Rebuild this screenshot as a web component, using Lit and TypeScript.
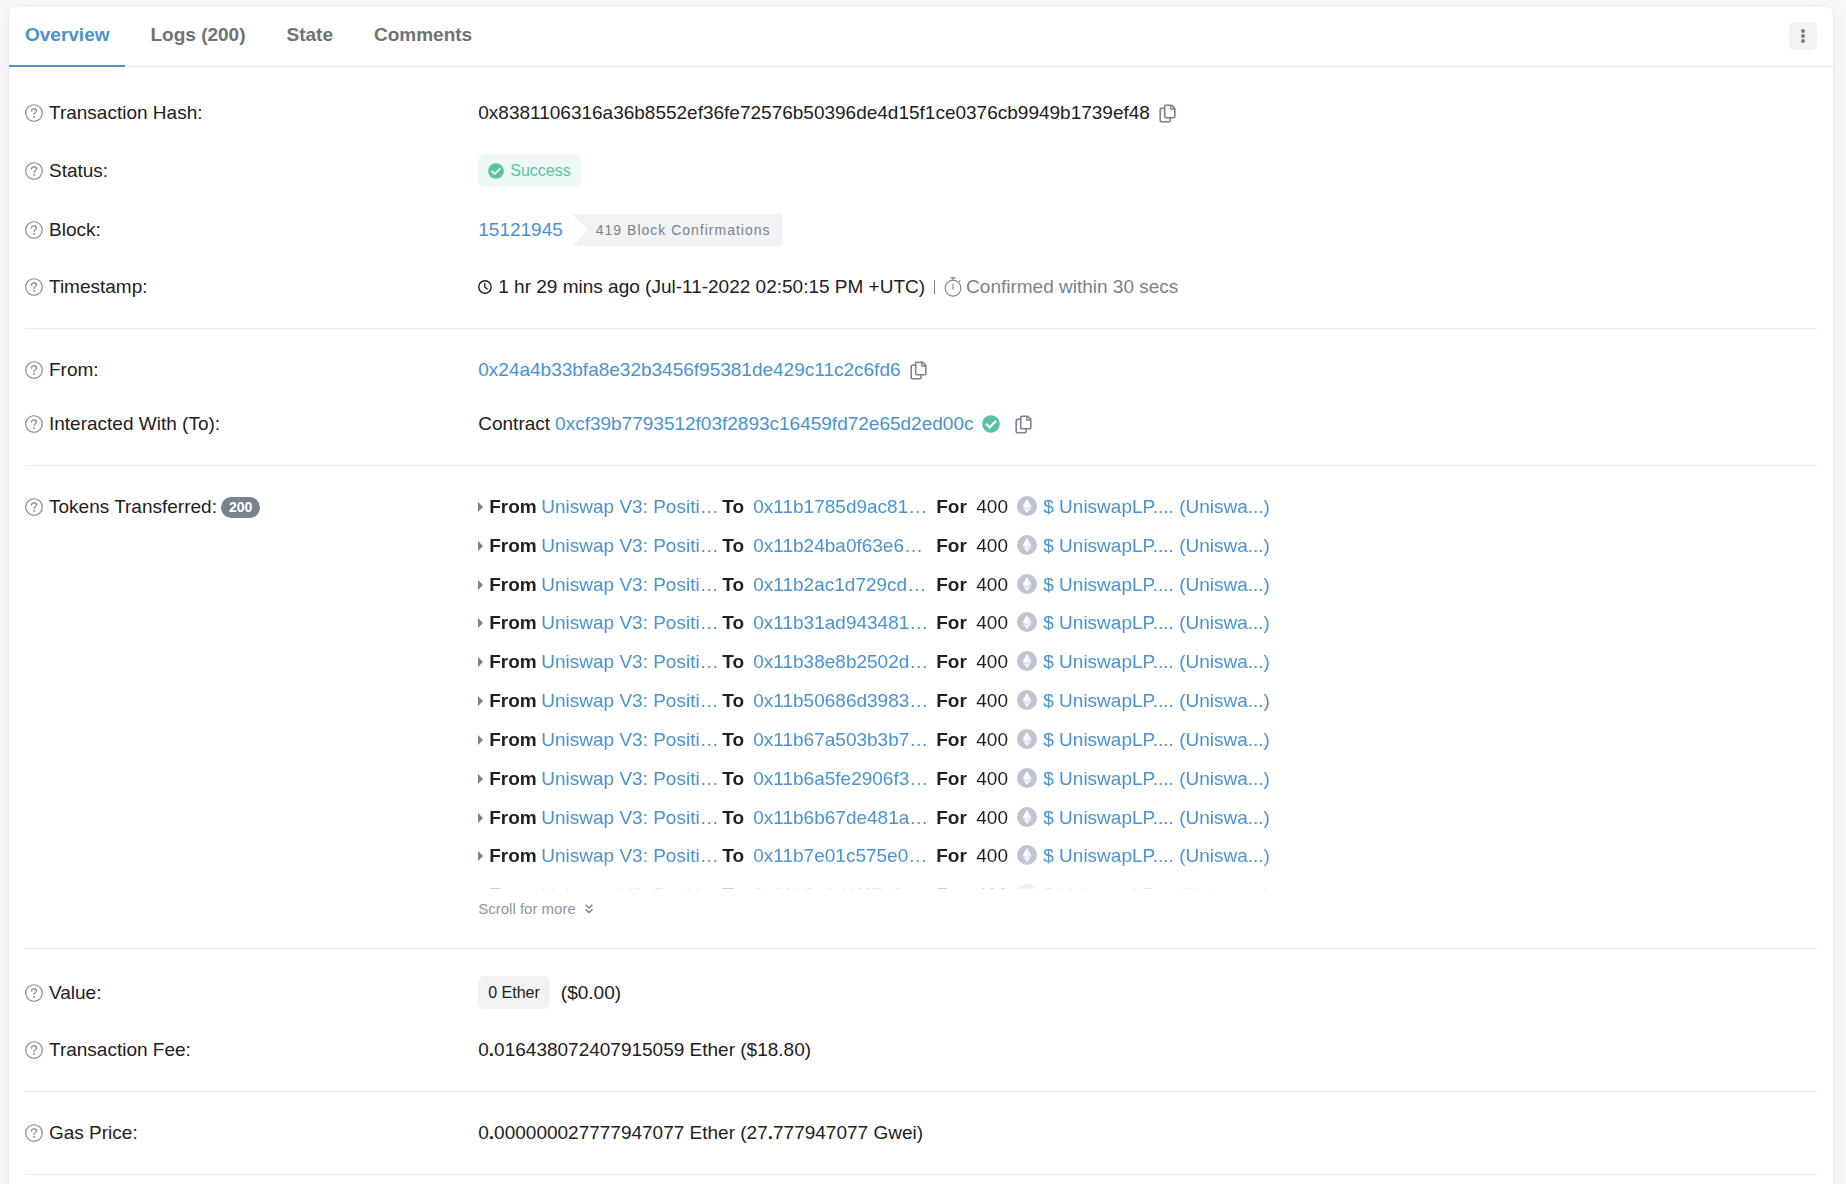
import { LitElement, html, css, nothing, type TemplateResult } from "lit";
import { customElement, property } from "lit/decorators.js";

interface Transfer {
  from: string;
  to: string;
  amount: string;
}

const recipients = [
  "0x11b1785d9ac81…",
  "0x11b24ba0f63e6…",
  "0x11b2ac1d729cd…",
  "0x11b31ad943481…",
  "0x11b38e8b2502d…",
  "0x11b50686d3983…",
  "0x11b67a503b3b7…",
  "0x11b6a5fe2906f3…",
  "0x11b6b67de481a…",
  "0x11b7e01c575e0…",
  "0x11b8a1d4f27c3…",
];

const transfers: Transfer[] = recipients.map((to) => ({
  from: "Uniswap V3: Positi…",
  to,
  amount: "400",
}));

const helpIcon = html`<svg class="help" viewBox="0 0 18 18" aria-hidden="true">
  <circle cx="9" cy="9" r="8.3" fill="none" stroke="currentColor" stroke-width="1.1" />
  <path d="M6.5 7.1C6.5 5.6 7.6 4.8 9 4.8s2.5.8 2.5 2.1c0 1.7-2.4 1.8-2.4 3.6" fill="none" stroke="currentColor" stroke-width="1.2" stroke-linecap="round" />
  <circle cx="9.1" cy="12.9" r=".9" fill="currentColor" />
</svg>`;

const checkIcon = html`<svg class="check" viewBox="0 0 512 512" aria-hidden="true">
  <path fill="currentColor" d="M504 256c0 136.967-111.033 248-248 248S8 392.967 8 256 119.033 8 256 8s248 111.033 248 248zM227.314 387.314l184-184c6.248-6.248 6.248-16.379 0-22.627l-22.627-22.627c-6.248-6.249-16.379-6.249-22.628 0L216 308.118l-70.059-70.059c-6.248-6.248-16.379-6.248-22.628 0l-22.627 22.627c-6.248 6.248-6.248 16.379 0 22.627l104 104c6.249 6.249 16.379 6.249 22.628.001z" />
</svg>`;

const copyIcon = html`<svg class="copy-icon" viewBox="0 0 17 19" aria-hidden="true">
  <g fill="none" stroke="currentColor" stroke-width="1.6" stroke-linejoin="round">
    <path d="M6.7 1.2H12.4L15.8 4.4V12.6Q15.8 13.8 14.6 13.8H6.9Q5.7 13.8 5.7 12.6V2.2Q5.7 1.2 6.7 1.2Z" />
    <path d="M5.7 4.3H2.3Q1.2 4.3 1.2 5.4V16.6Q1.2 17.8 2.3 17.8H9.9Q11.1 17.8 11.1 16.6V13.8" />
    <path d="M11.8 1.4V5H15.6" stroke-width="1.3" />
  </g>
</svg>`;

const clockIcon = html`<svg class="clock" viewBox="0 0 14 14" aria-hidden="true">
  <circle cx="7" cy="7" r="6.2" fill="none" stroke="currentColor" stroke-width="1.4" />
  <path d="M6.8 3.4V7.2L9.2 8.9" fill="none" stroke="currentColor" stroke-width="1.3" stroke-linecap="round" />
</svg>`;

const stopwatchIcon = html`<svg class="stopwatch" viewBox="0 0 18 20" aria-hidden="true">
  <g fill="none" stroke="currentColor" stroke-width="1.1" stroke-linecap="round">
    <circle cx="9" cy="11.2" r="7.9" />
    <path d="M7 .9H11M9 1V3.2M15 4.6L16 3.6M9 7V12.2" />
  </g>
</svg>`;

const etherIcon = html`<svg class="ether" viewBox="0 0 20 20" aria-hidden="true">
  <circle cx="10" cy="10" r="10" fill="#bfc4d2" />
  <path d="M10 3L14.3 10.2 10 12.7 5.7 10.2Z" fill="#fff" />
  <path d="M5.7 11.2L10 13.7 14.3 11.2 10 17Z" fill="#fff" />
  <path d="M10 3V12.7L14.3 10.2Z M10 13.7V17L14.3 11.2Z" fill="#f1f2f6" />
</svg>`;

const chevronsIcon = html`<svg class="chevrons" viewBox="0 0 8 10" aria-hidden="true">
  <path d="M1 1.2L4 4 7 1.2M1 5.7L4 8.5 7 5.7" fill="none" stroke="currentColor" stroke-width="1.5" stroke-linecap="round" stroke-linejoin="round" />
</svg>`;

@customElement("detail-row")
class DetailRow extends LitElement {
  @property() label = "";
  @property() count = "";

  static styles = css`
    :host {
      display: grid;
      grid-template-columns: 1fr 3fr;
      column-gap: 7px;
      line-height: 28px;
    }
    .label {
      display: flex;
      align-items: center;
      align-self: center;
      gap: 6px;
    }
    :host([top]) .label {
      align-self: start;
    }
    .help {
      width: 18px;
      height: 18px;
      color: #77838f;
    }
    .count {
      padding: 0 8px;
      margin-left: -2px;
      border-radius: 11px;
      background: #77838f;
      color: #fff;
      font-size: 14px;
      font-weight: 700;
      line-height: 21px;
    }
    .value {
      display: flex;
      align-items: center;
      min-width: 0;
    }
  `;

  render() {
    return html`
      <div class="label">
        ${helpIcon}<span>${this.label}</span>
        ${this.count ? html`<span class="count">${this.count}</span>` : nothing}
      </div>
      <div class="value"><slot></slot></div>
    `;
  }
}

@customElement("app-root")
class AppRoot extends LitElement {
  static styles = css`
    :host {
      display: flex;
      flex-direction: column;
      box-sizing: border-box;
      min-height: 100vh;
      padding: 5px 12px 0 8px;
      background: #f8f9fb;
      color: #1e2022;
      font-family: "Liberation Sans", Arial, sans-serif;
      font-size: 19px;
    }
    * {
      box-sizing: border-box;
    }
    a {
      color: #4a92d2;
      text-decoration: none;
    }
    button {
      padding: 0;
      border: 0;
      background: none;
      color: #77838f;
      font: inherit;
      cursor: pointer;
    }
    .card {
      flex: 1;
      border: 1px solid #e9ecef;
      border-bottom: 0;
      border-radius: 9px 9px 0 0;
      background: #fff;
      box-shadow: 0 8px 19px rgba(189, 197, 209, 0.2);
    }
    .header {
      display: flex;
      justify-content: space-between;
      align-items: center;
      padding-right: 16px;
      border-bottom: 1px solid #e7eaee;
    }
    .tabs {
      display: flex;
      gap: 10px;
      margin-bottom: -1px;
    }
    .tab {
      height: 61px;
      padding: 0 15px 2px 16px;
      border-bottom: 2px solid transparent;
      color: #6f7276;
      font-weight: 700;
      line-height: 57px;
    }
    .tab.active {
      border-color: #5b8fc0;
      color: #4a92d2;
    }
    .more {
      display: grid;
      place-items: center;
      width: 28px;
      height: 28px;
      border-radius: 5px;
      background: #f1f2f4;
    }
    .more svg {
      width: 4px;
      height: 14px;
    }
    .body {
      padding: 5px 16px 0 16px;
    }
    .section {
      display: grid;
      gap: 27px;
      padding: 27px 0;
      border-bottom: 1px solid #e9ebee;
    }
    .section.tight {
      gap: 26px;
    }
    .copy {
      display: flex;
      margin-left: 9px;
    }
    .copy-icon {
      width: 17px;
      height: 19px;
    }
    .check {
      width: 16px;
      height: 16px;
      color: #56c3a2;
    }
    .verified .check {
      width: 18px;
      height: 18px;
    }
    .verified {
      display: flex;
      margin: 0 6px 0 9px;
    }
    .badge {
      display: inline-flex;
      align-items: center;
      gap: 6px;
      height: 33px;
      padding: 0 10px;
      border-radius: 7px;
      background: #f1f2f4;
      font-size: 16px;
    }
    .badge.success {
      background: #eef8f5;
      color: #56c3a2;
    }
    .confirmations {
      margin-left: 9px;
      padding: 0 12px 0 24px;
      border-radius: 4px;
      background: #f1f2f4;
      clip-path: polygon(0 0, 100% 0, 100% 100%, 0 100%, 16px 50%);
      color: #77838f;
      font-size: 14px;
      letter-spacing: 1px;
      line-height: 32px;
    }
    .clock {
      width: 14px;
      height: 14px;
      margin-right: 6px;
    }
    .muted {
      color: #77838f;
    }
    .bar {
      width: 1px;
      height: 14px;
      margin: 0 9px;
      background: #77838f;
    }
    .stopwatch {
      width: 18px;
      height: 20px;
      margin-right: 4px;
      color: #77838f;
    }
    .contract {
      margin-right: 5px;
    }
    .transfers {
      display: grid;
      gap: 8px;
    }
    .list {
      display: grid;
      grid-auto-rows: calc(100% * 10 / 102);
      height: 396px;
      margin: 0;
      padding: 0;
      overflow-y: auto;
      scrollbar-width: none;
      list-style: none;
      mask-image: linear-gradient(#000 calc(100% - 30px), rgba(0, 0, 0, 0.2));
    }
    .transfer {
      display: grid;
      grid-template-columns: 11px 52px 181px 31px 183px 40px 41px 26px auto;
      align-items: center;
      height: 28px;
      white-space: nowrap;
    }
    .marker {
      border-left: 5px solid #77838f;
      border-block: 5px solid transparent;
      justify-self: start;
    }
    .ether {
      width: 20px;
      height: 20px;
      margin-bottom: 2px;
    }
    .scroll {
      display: flex;
      align-items: center;
      gap: 9px;
      color: #8c98a4;
      font-size: 15px;
      line-height: 24px;
    }
    .chevrons {
      width: 8px;
      height: 10px;
      color: #77838f;
    }
    .fiat {
      margin-left: 11px;
    }
  `;

  private copyButton(label: string): TemplateResult {
    return html`<button class="copy" aria-label=${label}>${copyIcon}</button>`;
  }

  private transferRow(t: Transfer): TemplateResult {
    return html`<li class="transfer">
      <span class="marker"></span>
      <b>From</b><a href="#from">${t.from}</a>
      <b>To</b><a href="#to">${t.to}</a>
      <b>For</b><span>${t.amount}</span>
      ${etherIcon}<a href="#token">$ UniswapLP.... (Uniswa...)</a>
    </li>`;
  }

  render() {
    return html`
      <main class="card">
        <div class="header">
          <nav class="tabs">
            <a class="tab active" href="#overview">Overview</a>
            <a class="tab" href="#logs">Logs (200)</a>
            <a class="tab" href="#state">State</a>
            <a class="tab" href="#comments">Comments</a>
          </nav>
          <button class="more" aria-label="More options">
            <svg viewBox="0 0 4 14" fill="currentColor" aria-hidden="true">
              <circle cx="2" cy="2" r="2" />
              <circle cx="2" cy="7" r="2" />
              <circle cx="2" cy="12" r="2" />
            </svg>
          </button>
        </div>
        <div class="body">
          <section class="section">
            <detail-row label="Transaction Hash:">
              <span>0x8381106316a36b8552ef36fe72576b50396de4d15f1ce0376cb9949b1739ef48</span>
              ${this.copyButton("Copy transaction hash")}
            </detail-row>
            <detail-row label="Status:">
              <span class="badge success">${checkIcon}<span>Success</span></span>
            </detail-row>
            <detail-row label="Block:">
              <a href="#block">15121945</a>
              <span class="confirmations">419 Block Confirmations</span>
            </detail-row>
            <detail-row label="Timestamp:">
              ${clockIcon}
              <span>1 hr 29 mins ago (Jul-11-2022 02:50:15 PM +UTC)</span>
              <span class="bar"></span>
              ${stopwatchIcon}
              <span class="muted">Confirmed within 30 secs</span>
            </detail-row>
          </section>
          <section class="section tight">
            <detail-row label="From:">
              <a href="#sender">0x24a4b33bfa8e32b3456f95381de429c11c2c6fd6</a>
              ${this.copyButton("Copy sender address")}
            </detail-row>
            <detail-row label="Interacted With (To):">
              <span class="contract">Contract</span>
              <a href="#contract">0xcf39b7793512f03f2893c16459fd72e65d2ed00c</a>
              <span class="verified">${checkIcon}</span>
              ${this.copyButton("Copy contract address")}
            </detail-row>
          </section>
          <section class="section">
            <detail-row label="Tokens Transferred:" count="200" top>
              <div class="transfers">
                <ul class="list">
                  ${transfers.map((t) => this.transferRow(t))}
                </ul>
                <a class="scroll" href="#more">Scroll for more ${chevronsIcon}</a>
              </div>
            </detail-row>
          </section>
          <section class="section">
            <detail-row label="Value:">
              <span class="badge">0 Ether</span>
              <span class="fiat">($0.00)</span>
            </detail-row>
            <detail-row label="Transaction Fee:">
              <span>0<b>.</b>016438072407915059 Ether ($18.80)</span>
            </detail-row>
          </section>
          <section class="section">
            <detail-row label="Gas Price:">
              <span>0<b>.</b>000000027777947077 Ether (27<b>.</b>777947077 Gwei)</span>
            </detail-row>
          </section>
        </div>
      </main>
    `;
  }
}
